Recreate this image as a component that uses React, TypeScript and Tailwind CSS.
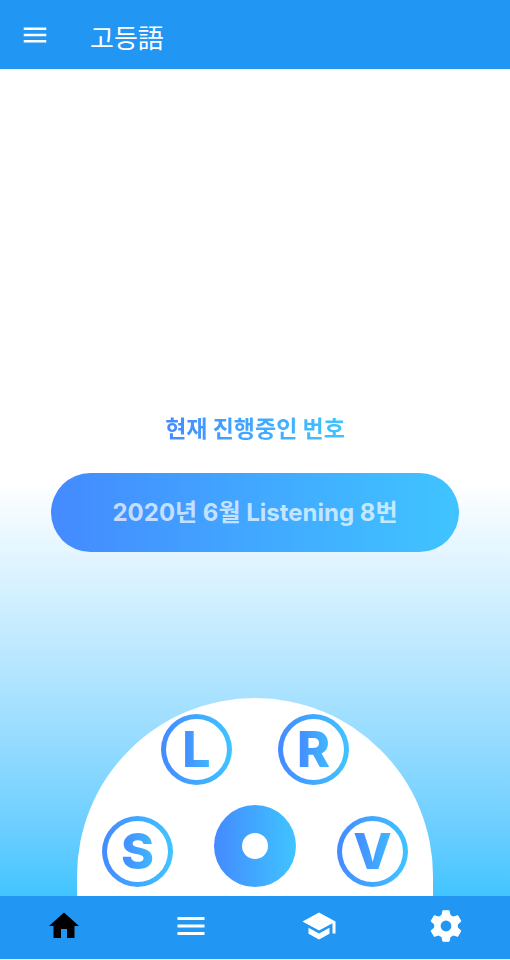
import React from 'react';

function Icon({ d, size }: { d: string; size: string }) {
  return (
    <svg viewBox="0 0 24 24" fill="currentColor" className={size} aria-hidden="true">
      <path d={d} />
    </svg>
  );
}

const TOOTH = 'M9.9 1.8h4.2l.9 4.4v11.6l-.9 4.4H9.9L9 17.8V6.2z';

function Gear() {
  return (
    <svg viewBox="0 0 24 24" fill="currentColor" className="size-9" aria-hidden="true">
      <circle cx="12" cy="12" r="7.9" />
      <path d={TOOTH} stroke="currentColor" strokeWidth="0.6" strokeLinejoin="round" />
      <path d={TOOTH} stroke="currentColor" strokeWidth="0.6" strokeLinejoin="round" transform="rotate(60 12 12)" />
      <path d={TOOTH} stroke="currentColor" strokeWidth="0.6" strokeLinejoin="round" transform="rotate(120 12 12)" />
      <circle cx="12" cy="12" r="3.6" fill="#2196f3" />
    </svg>
  );
}

const MENU = 'M3 18h18v-2H3v2zm0-5h18v-2H3v2zm0-7v2h18V6H3z';
const HOME = 'M10 20v-6h4v6h5v-8h3L12 3 2 12h3v8z';
const SCHOOL = 'M5 13.18v4L12 21l7-3.82v-4L12 17l-7-3.82zM12 3L1 9l11 6 9-4.91V17h2V9L12 3z';

function DialButton({ letter, label }: { letter: string; label: string }) {
  return (
    <button
      type="button"
      aria-label={label}
      className="size-[71px] shrink-0 rounded-full bg-linear-to-r from-[#448aff] to-[#40c4ff] p-[5px]"
    >
      <span className="flex size-full items-center justify-center rounded-full bg-white pb-0.5">
        <span className="bg-linear-to-r from-[#448aff] to-[#40b8ff] bg-clip-text text-[50px] leading-[60px] font-extrabold text-transparent">
          {letter}
        </span>
      </span>
    </button>
  );
}

const tabs = [
  { label: '홈', icon: <Icon d={HOME} size="size-9" />, color: 'text-black' },
  { label: '목록', icon: <Icon d={MENU} size="size-9" />, color: 'text-white' },
  { label: '학습', icon: <Icon d={SCHOOL} size="size-9" />, color: 'text-white' },
  { label: '설정', icon: <Gear />, color: 'text-white' },
];

export default function App() {
  return (
    <div className="flex min-h-screen flex-col bg-white pb-px font-['Inter','Noto_Sans_CJK_KR',sans-serif]">
      <header className="flex h-[69px] items-center gap-[40px] bg-[#2196f3] px-5 text-white">
        <button type="button" aria-label="메뉴">
          <Icon d={MENU} size="size-[30px]" />
        </button>
        <h1 className="pt-1 font-['Noto_Sans_CJK_KR',sans-serif] text-[26px] leading-[36px]">고등語</h1>
      </header>

      <main className="flex grow flex-col items-center bg-linear-to-b from-white from-50% to-[#40c4ff]">
        <section className="flex w-full grow flex-col items-center justify-end px-[10%] pb-[146px]">
          <h2 className="mb-[30px] bg-linear-to-r from-[#448aff] to-[#40c4ff] bg-clip-text font-['Noto_Sans_CJK_KR',sans-serif] text-[23px] leading-[32px] font-bold text-transparent">
            현재 진행중인 번호
          </h2>
          <button
            type="button"
            className="h-[79px] w-full rounded-full bg-linear-to-r from-[#448aff] to-[#40c4ff] text-[24px] font-bold text-white/70"
          >
            2020년 6월 Listening 8번
          </button>
        </section>

        <section className="flex w-[356px] flex-col gap-5 rounded-t-[178px] bg-white pt-4 pb-[9px]">
          <div className="flex justify-center gap-[46px]">
            <DialButton letter="L" label="Listening" />
            <DialButton letter="R" label="Reading" />
          </div>
          <div className="flex items-end justify-center gap-[41px]">
            <DialButton letter="S" label="Speaking" />
            <button
              type="button"
              aria-label="시작"
              className="flex size-[82px] shrink-0 items-center justify-center rounded-full bg-linear-to-r from-[#448aff] to-[#40c4ff]"
            >
              <span className="size-[26px] rounded-full bg-white" />
            </button>
            <DialButton letter="V" label="Vocabulary" />
          </div>
        </section>
      </main>

      <nav className="grid h-[63px] grid-cols-4 bg-[#2196f3] pb-1">
        {tabs.map(({ label, icon, color }) => (
          <button
            key={label}
            type="button"
            aria-label={label}
            className={`flex items-center justify-center ${color}`}
          >
            {icon}
          </button>
        ))}
      </nav>
    </div>
  );
}
